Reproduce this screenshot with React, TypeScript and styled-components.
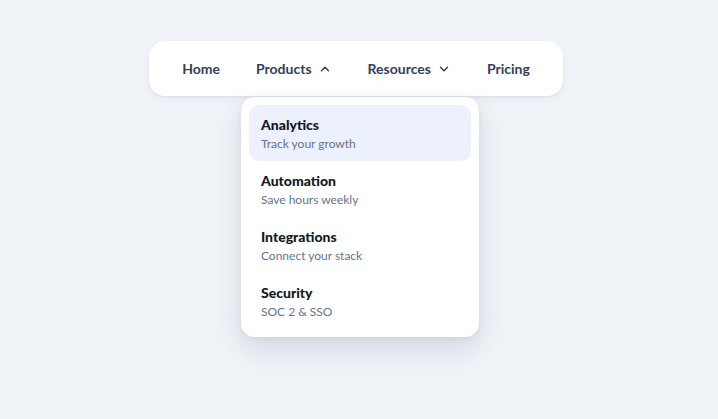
import styled, { createGlobalStyle } from 'styled-components';
import { ChevronDown, ChevronUp } from 'lucide-react';

const GlobalStyle = createGlobalStyle`
  html, body {
    margin: 0;
    padding: 0;
    background: #f0f3f8;
    font-family: Lato, "Noto Sans", sans-serif;
  }
`;

const Page = styled.div`
  width: 718px;
  height: 419px;
  display: flex;
  justify-content: center;
  align-items: flex-start;
  padding-top: 41px;
  padding-right: 6px;
  box-sizing: border-box;
`;

const NavBar = styled.nav`
  position: relative;
  display: flex;
  align-items: center;
  gap: 4px;
  height: 55px;
  padding: 0 17px;
  box-sizing: border-box;
  background: #ffffff;
  border-radius: 16px;
  box-shadow: 0 1px 3px rgba(15, 23, 42, 0.06), 0 4px 12px rgba(15, 23, 42, 0.04);
`;

const NavItem = styled.div`
  position: relative;
`;

const NavButton = styled.button`
  display: flex;
  align-items: center;
  gap: 6px;
  height: 36px;
  padding: 0 16px;
  border: none;
  background: transparent;
  font-family: inherit;
  font-size: 14px;
  font-weight: 700;
  color: #334155;
  cursor: pointer;

  svg {
    color: #334155;
  }
`;

const Dropdown = styled.div`
  position: absolute;
  top: 46px;
  left: 1px;
  width: 238px;
  padding: 8px;
  box-sizing: border-box;
  background: #ffffff;
  border-radius: 14px;
  box-shadow: 0 12px 30px rgba(15, 23, 42, 0.12), 0 2px 6px rgba(15, 23, 42, 0.06);
  display: flex;
  flex-direction: column;
`;

const MenuItem = styled.a<{ $active?: boolean }>`
  display: flex;
  flex-direction: column;
  padding: 10px 12px 8px;
  border-radius: 10px;
  background: ${p => (p.$active ? '#edf1fd' : 'transparent')};
  text-decoration: none;
  cursor: pointer;
`;

const ItemTitle = styled.span`
  font-size: 14px;
  line-height: 20px;
  font-weight: 900;
  color: #111827;
`;

const ItemDesc = styled.span`
  font-size: 12px;
  line-height: 18px;
  color: #64748b;
`;

const products = [
  { title: 'Analytics', desc: 'Track your growth' },
  { title: 'Automation', desc: 'Save hours weekly' },
  { title: 'Integrations', desc: 'Connect your stack' },
  { title: 'Security', desc: 'SOC 2 & SSO' },
];

export default function App() {
  return (
    <>
      <GlobalStyle />
      <Page>
        <NavBar>
          <NavItem>
            <NavButton>Home</NavButton>
          </NavItem>
          <NavItem>
            <NavButton>
              Products
              <ChevronUp size={14} strokeWidth={2.5} />
            </NavButton>
            <Dropdown>
              {products.map((p, i) => (
                <MenuItem key={p.title} $active={i === 0}>
                  <ItemTitle>{p.title}</ItemTitle>
                  <ItemDesc>{p.desc}</ItemDesc>
                </MenuItem>
              ))}
            </Dropdown>
          </NavItem>
          <NavItem>
            <NavButton>
              Resources
              <ChevronDown size={14} strokeWidth={2.5} />
            </NavButton>
          </NavItem>
          <NavItem>
            <NavButton>Pricing</NavButton>
          </NavItem>
        </NavBar>
      </Page>
    </>
  );
}
